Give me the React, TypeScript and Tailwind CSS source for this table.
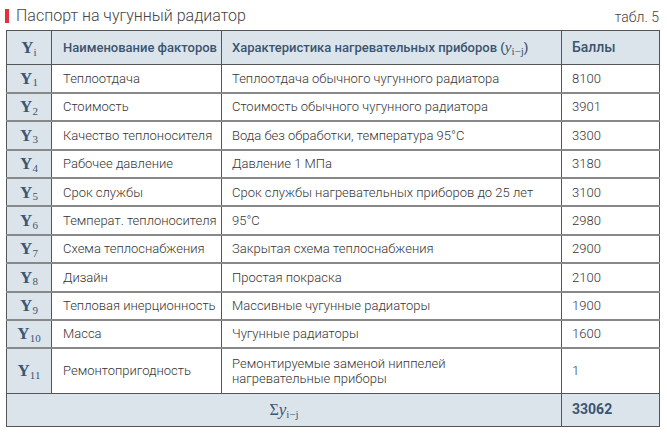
import React from "react";

const rows: [string, string, string, string][] = [
  ["1", "Теплоотдача", "Теплоотдача обычного чугунного радиатора", "8100"],
  ["2", "Стоимость", "Стоимость обычного чугунного радиатора", "3901"],
  ["3", "Качество теплоносителя", "Вода без обработки, температура 95°С", "3300"],
  ["4", "Рабочее давление", "Давление 1 МПа", "3180"],
  ["5", "Срок службы", "Срок службы нагревательных приборов до 25 лет", "3100"],
  ["6", "Температ. теплоносителя", "95°С", "2980"],
  ["7", "Схема теплоснабжения", "Закрытая схема теплоснабжения", "2900"],
  ["8", "Дизайн", "Простая покраска", "2100"],
  ["9", "Тепловая инерционность", "Массивные чугунные радиаторы", "1900"],
  ["10", "Масса", "Чугунные радиаторы", "1600"],
];

const Yi = ({ sub }: { sub: string }) => (
  <span className="font-['Liberation_Serif',serif] font-bold text-[17px] text-[#3b5673]">
    Y<sub className="text-[11px] font-normal">{sub}</sub>
  </span>
);

export default function App() {
  return (
    <div className="w-[667px] h-[434px] bg-white font-['Roboto',sans-serif] text-[#363636]">
      <div className="flex items-end justify-between pl-[5px] pr-[8px] pt-[6px] h-[30px]">
        <div className="flex items-center gap-[7px] pb-[6px]">
          <span className="w-[4px] h-[14px] bg-[#e2303f]" />
          <span className="text-[16px] font-light leading-none text-[#444]">Паспорт на чугунный радиатор</span>
        </div>
        <span className="text-[14px] font-light leading-none pb-[6px] text-[#444]">табл. 5</span>
      </div>
      <table className="ml-[6px] w-[653px] border-collapse border border-[#555] table-fixed text-[13px] font-light">
        <colgroup>
          <col className="w-[45px]" />
          <col className="w-[170px]" />
          <col className="w-[340px]" />
          <col className="w-[98px]" />
        </colgroup>
        <thead>
          <tr className="h-[34px] bg-[#dce4eb] text-[#3a5570] font-medium">
            <th className="border border-[#555] text-center"><Yi sub="i" /></th>
            <th className="border border-[#555] text-left pl-[11px] font-medium">Наименование факторов</th>
            <th className="border border-[#555] text-left pl-[10px] font-medium">
              Характеристика нагревательных приборов (
              <span className="font-['Liberation_Serif',serif] italic text-[15px] font-normal">y</span>
              <sub className="font-['Liberation_Serif',serif] text-[11px] font-normal">i−j</sub>)
            </th>
            <th className="border border-[#555] text-left pl-[10px] font-medium text-[14px]">Баллы</th>
          </tr>
        </thead>
        <tbody>
          {rows.map(([n, name, desc, pts]) => (
            <tr key={n} className="h-[28.4px] border-b-2 border-[#888]">
              <td className="bg-[#dce4eb] border-r border-[#555] text-center"><Yi sub={n} /></td>
              <td className="border-r border-[#555] pl-[11px] whitespace-nowrap">{name}</td>
              <td className="border-r border-[#555] pl-[10px] whitespace-nowrap">{desc}</td>
              <td className="pl-[10px]">{pts}</td>
            </tr>
          ))}
          <tr className="h-[45px] border-b border-[#555]">
            <td className="bg-[#dce4eb] border-r border-[#555] text-center"><Yi sub="11" /></td>
            <td className="border-r border-[#555] pl-[11px]">Ремонтопригодность</td>
            <td className="border-r border-[#555] pl-[10px] leading-[15px]">
              Ремонтируемые заменой ниппелей
              <br />
              нагревательные приборы
            </td>
            <td className="pl-[10px]">1</td>
          </tr>
          <tr className="h-[33px] bg-[#dce4eb]">
            <td colSpan={3} className="border-r border-[#555] text-center text-[#3b5673] font-['Liberation_Serif',serif]">
              <span className="text-[16px]">Σ</span>
              <span className="italic text-[17px]">y</span>
              <sub className="text-[11px]">i−j</sub>
            </td>
            <td className="pl-[10px] font-bold text-[14px] text-[#3a5570]">33062</td>
          </tr>
        </tbody>
      </table>
    </div>
  );
}
